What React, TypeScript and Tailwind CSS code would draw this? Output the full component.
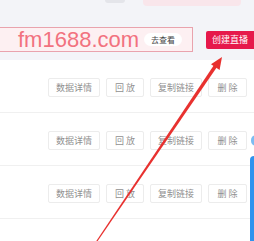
import React from 'react';

const rows = [0, 1, 2];

const ActionButton: React.FC<{ label: string; width: string }> = ({ label, width }) => (
  <button
    className={`${width} shrink-0 h-[19px] rounded-[2px] border border-[#ececec] bg-white text-[9px] leading-none text-[#909090] flex items-center justify-center`}
  >
    {label}
  </button>
);

export default function App() {
  return (
    <div
      className="relative w-[254px] h-[241px] overflow-hidden bg-white"
      style={{ fontFamily: '"Noto Sans CJK SC", "Liberation Sans", sans-serif' }}
    >
      {/* top toolbar */}
      <div className="h-[60px] bg-[#f3f4f8] flex flex-col">
        <div className="flex h-[6px]">
          <div className="ml-[105px] w-[20px] h-[3px] bg-[#e4e5ea] rounded-b-sm" />
          <div className="ml-[18px] w-[98px] h-[6px] bg-[#f9e6eb] rounded-b-sm" />
        </div>
        <div className="mt-[21px] flex items-center">
          <div className="w-[193px] shrink-0 h-[25px] border border-l-0 border-[#e9a3ad] bg-[#fdf0f2] flex items-center">
            <span
              className="ml-[18px] text-[22px] leading-none text-[#f2727f]"
              style={{ fontFamily: '"Liberation Sans", Arial, sans-serif' }}
            >
              fm1688.com
            </span>
            <span className="ml-[5px] w-[38px] h-[13px] rounded-full bg-white text-[8px] leading-none text-[#444] flex items-center justify-center">
              去查看
            </span>
          </div>
          <button className="ml-[13px] shrink-0 w-[56px] h-[18px] rounded-[2px] bg-[#e6194b] text-white text-[9px] leading-none flex items-center justify-center pr-[8px]">
            创建直播
          </button>
        </div>
      </div>

      {/* list rows */}
      <div className="flex flex-col">
        {rows.map((r) => (
          <div
            key={r}
            className="h-[53px] border-b border-[#f0f0f0] flex items-center justify-end gap-[6px] pr-[7px] pt-[3px]"
          >
            <ActionButton label="数据详情" width="w-[52px]" />
            <ActionButton label="回 放" width="w-[38px]" />
            <ActionButton label="复制链接" width="w-[52px]" />
            <ActionButton label="删 除" width="w-[39px]" />
          </div>
        ))}
      </div>

      {/* blue side panel peeking in */}
      <div className="absolute left-[251px] top-[135px] w-[10px] h-[11px] rounded-full bg-[#7cbcf2]" />
      <div className="absolute left-[250px] top-[156px] w-[10px] h-[90px] rounded-tl-[4px] bg-[#2f93ee]" />

      {/* red annotation arrow */}
      <svg className="absolute left-0 top-0" width="254" height="241" viewBox="0 0 254 241">
        <polygon points="96.3,241 97.7,241 217,67 214,65" fill="#e8312f" />
        <polygon points="222,57 219.6,70 211,64.2" fill="#e8312f" />
      </svg>
    </div>
  );
}
